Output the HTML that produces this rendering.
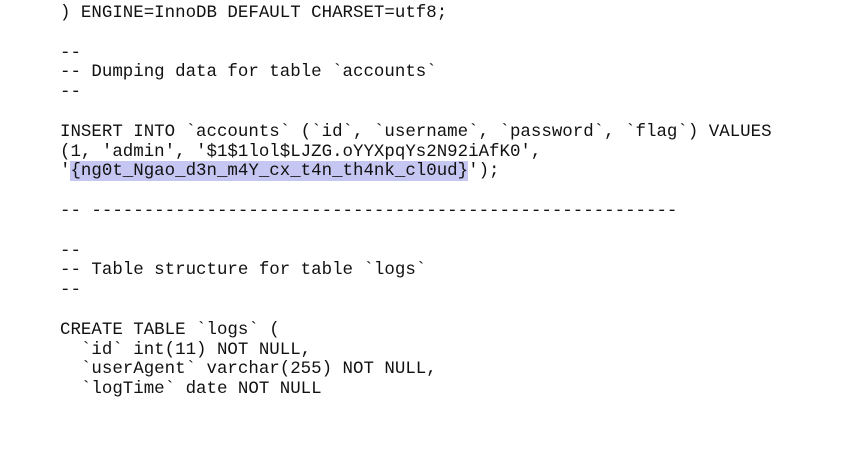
<!DOCTYPE html>
<html><head><meta charset="utf-8"><style>
html,body{margin:0;padding:0;background:#fff;width:853px;height:462px;overflow:hidden}
pre{margin:0;position:absolute;left:60px;top:4px;font-family:"Liberation Mono",monospace;font-size:17.45px;line-height:19.8px;color:#111;letter-spacing:0}
.h{background:#c6c6f2}
</style></head><body>
<pre>) ENGINE=InnoDB DEFAULT CHARSET=utf8;

--
-- Dumping data for table `accounts`
--

INSERT INTO `accounts` (`id`, `username`, `password`, `flag`) VALUES
(1, 'admin', '$1$1lol$LJZG.oYYXpqYs2N92iAfK0',
'<span class="h">{ng0t_Ngao_d3n_m4Y_cx_t4n_th4nk_cl0ud}</span>');

-- --------------------------------------------------------

--
-- Table structure for table `logs`
--

CREATE TABLE `logs` (
  `id` int(11) NOT NULL,
  `userAgent` varchar(255) NOT NULL,
  `logTime` date NOT NULL
</pre>
</body></html>
